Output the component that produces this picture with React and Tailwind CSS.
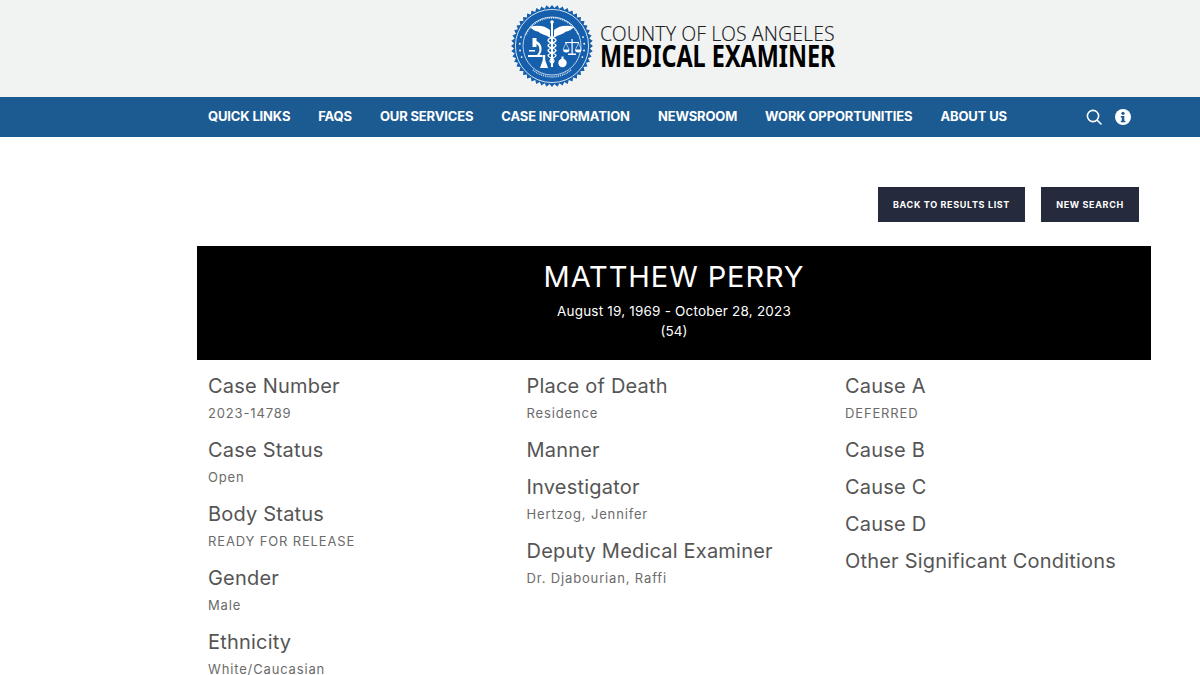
const NAV = ["QUICK LINKS","FAQS","OUR SERVICES","CASE INFORMATION","NEWSROOM","WORK OPPORTUNITIES","ABOUT US"];
const COLS = [
  [["Case Number","2023-14789"],["Case Status","Open"],["Body Status","READY FOR RELEASE"],["Gender","Male"],["Ethnicity","White/Caucasian"]],
  [["Place of Death","Residence"],["Manner"],["Investigator","Hertzog, Jennifer"],["Deputy Medical Examiner","Dr. Djabourian, Raffi"]],
  [["Cause A","DEFERRED"],["Cause B"],["Cause C"],["Cause D"],["Other Significant Conditions"]],
];
function Seal() {
  const teeth = [];
  for (let i = 0; i < 48; i++) {
    const a = (i / 48) * Math.PI * 2, b = ((i + 0.5) / 48) * Math.PI * 2;
    teeth.push(`${(41 + 41 * Math.cos(a)).toFixed(2)},${(41 + 41 * Math.sin(a)).toFixed(2)}`);
    teeth.push(`${(41 + 38 * Math.cos(b)).toFixed(2)},${(41 + 38 * Math.sin(b)).toFixed(2)}`);
  }
  const dots = [];
  for (const deg of [160, 172, 184, 196, -16, -4, 8, 20]) {
    const a = (deg * Math.PI) / 180;
    dots.push(<circle key={deg} cx={41 + 32.3 * Math.cos(a)} cy={41 + 32.3 * Math.sin(a)} r="0.9" fill="#fff" />);
  }
  return (
    <svg width="82" height="82" viewBox="0 0 82 82" className="shrink-0">
      <polygon points={teeth.join(" ")} fill="#155fac" />
      <circle cx="41" cy="41" r="36.6" fill="none" stroke="#e8eef6" strokeWidth="0.9" />
      {dots}
      {/* ring lettering, too small to read in the picture */}
      <path d="M14.500 30A29 29 0 0 1 67.500 30" fill="none" stroke="#c9dbef" strokeWidth="1.700" strokeDasharray="1 0.9" />
      <path d="M22 65A30 30 0 0 0 60 65" fill="none" stroke="#c9dbef" strokeWidth="1.700" strokeDasharray="1 0.9" />
      <circle cx="41" cy="41" r="29" fill="none" stroke="#fff" strokeWidth="0.7" />
      {/* caduceus */}
      <path d="M19 22c7-2.500 15-1.500 20 3v7c-5-2-9-3-12-5.500-2 0-6-2-8-4.500z" fill="#fff" />
      <path d="M63 22c-7-2.500-15-1.500-20 3v7c5-2 9-3 12-5.500 2 0 6-2 8-4.500z" fill="#fff" />
      <circle cx="41" cy="17" r="1.800" fill="#fff" />
      <rect x="40" y="17" width="2" height="45" fill="#fff" />
      <path d="M37 31c3 2 8 2 8 4.500s-8 2.500-8 5 8 2.500 8 5-8 2.500-8 5 6 2.500 6 5-2 2-2 4M45 31c-3 2-8 2-8 4.500s8 2.500 8 5-8 2.500-8 5 8 2.500 8 5-6 2.500-6 5 2 2 2 4" fill="none" stroke="#fff" strokeWidth="1.300" />
      {/* microscope */}
      <path d="M21.500 33h4v3c3.500 1.500 5.500 5 5 9-.2 2-1 3.500-2 5h3v2H17v-2h9c2-2 3-5 2-8-.4-1.200-1.200-2.200-2.500-3v3h-4z" fill="#fff" />
      <rect x="18" y="45" width="6" height="1.500" fill="#fff" />
      {/* scales */}
      <path d="M60.500 34h1.200v14.500h3.300V50h-8v-1.500h3.500z" fill="#fff" />
      <rect x="54" y="37" width="14" height="1.100" fill="#fff" />
      <path d="M55 38l-3 6.500M55 38l3 6.500M67.500 38l-3 6.500M67.500 38l3 6.500" fill="none" stroke="#fff" strokeWidth="0.6" />
      <path d="M52 44.500h6.500a3.250 3 0 0 1-6.500 0zM64 44.500h6.500a3.250 3 0 0 1-6.500 0z" fill="#fff" />
      {/* flask */}
      <path d="M31.800 50h2.400v5l2.800 8h-8l2.800-8z" fill="#fff" />
      {/* bulb */}
      <rect x="50.500" y="51.500" width="2" height="4" fill="#fff" />
      <circle cx="51.500" cy="58" r="4.200" fill="#fff" />
    </svg>
  );
}
export default function App() {
  return (
    <div className="h-[675px] w-[1200px] overflow-hidden bg-white font-['Inter',sans-serif]">
      <header className="flex h-[97px] items-center bg-[#f1f3f2] pb-[5px] pl-[511px]">
        <div className="flex items-center gap-[7px]">
          <Seal />
          <div className="flex flex-col pb-[5px] font-['Noto_Sans',sans-serif] leading-none">
            <span className="text-[19.5px] leading-[23px] font-light tracking-[0.05px] whitespace-nowrap text-[#222]">COUNTY OF LOS ANGELES</span>
            <span className="w-[236px] origin-left scale-x-[0.78] text-[30px] leading-[21px] font-bold whitespace-nowrap text-black">MEDICAL EXAMINER</span>
          </div>
        </div>
      </header>
      <nav className="flex h-10 items-center justify-between bg-[#1c5a92] pr-[69px] pl-[208px]">
        <ul className="flex items-center gap-[28px]">
          {NAV.map((n) => (
            <li key={n} className="text-[13px] font-bold tracking-[-0.15px] text-white">{n}</li>
          ))}
        </ul>
        <div className="flex items-center gap-[13px]">
          <svg width="16" height="16" viewBox="0 0 16 16" fill="none" stroke="#fff" strokeWidth="1.600">
            <circle cx="7" cy="7" r="5.600" />
            <path d="M11.200 11.200L15 15" strokeLinecap="round" />
          </svg>
          <svg width="16" height="16" viewBox="0 0 16 16">
            <circle cx="8" cy="8" r="8" fill="#fff" />
            <circle cx="8" cy="4.300" r="1.600" fill="#1c5a92" />
            <path d="M5.800 7h3.500v4.800h1v1.500H5.800v-1.500h1V8.500h-1z" fill="#1c5a92" />
          </svg>
        </div>
      </nav>
      <main className="flex flex-col pt-[50px]">
        <div className="flex justify-end gap-4 pr-[61px]">
          <button className="h-[35px] w-[147px] bg-[#252a3c] text-[9px] font-bold tracking-[0.65px] text-white">BACK TO RESULTS LIST</button>
          <button className="h-[35px] w-[98px] bg-[#252a3c] text-[9px] font-bold tracking-[0.65px] text-white">NEW SEARCH</button>
        </div>
        <section className="mt-6 ml-[197px] flex h-[114px] w-[954px] flex-col items-center bg-black pt-[13px] text-white">
          <h1 className="text-[29px] leading-9 tracking-[0.9px]">MATTHEW PERRY</h1>
          <p className="mt-[6px] text-[13.5px] leading-5 tracking-[0.2px]">August 19, 1969 - October 28, 2023</p>
          <p className="text-[13.5px] leading-5">(54)</p>
        </section>
        <div className="ml-[208px] grid grid-cols-[318.5px_318.5px_318.5px] pt-[12px]">
          {COLS.map((col, i) => (
            <div key={i} className="flex flex-col">
              {col.map(([label, value]) => (
                <div key={label} className="pb-[9px]">
                  <div className="text-[20px] leading-[28px] tracking-[0.2px] text-[#555]">{label}</div>
                  {value && <div className="text-[13px] leading-[27px] tracking-[0.85px] text-[#6b6b6b]">{value}</div>}
                </div>
              ))}
            </div>
          ))}
        </div>
      </main>
    </div>
  );
}
